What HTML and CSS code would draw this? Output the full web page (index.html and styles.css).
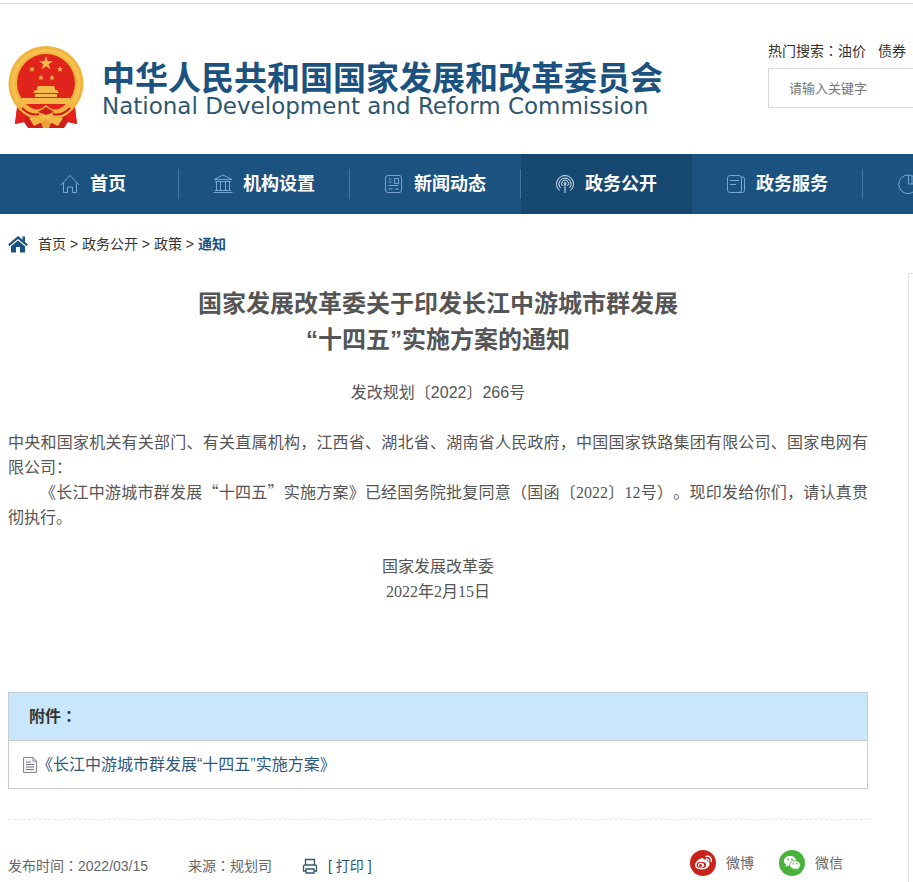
FILE: index.html
```html
<!DOCTYPE html>
<html lang="zh-CN">
<head>
<meta charset="utf-8">
<meta name="viewport" content="width=device-width, initial-scale=1">
<title>国家发展改革委关于印发长江中游城市群发展“十四五”实施方案的通知</title>
<link rel="stylesheet" href="styles.css">
</head>
<body>
<header class="header">
  <svg class="emblem" viewBox="0 0 76 82" aria-hidden="true">
    <path d="M10 54L7 78l9-2 4 6h36l4-6 9 2-3-24z" fill="#cf1f1b"/>
    <path d="M10 54L7 78l9-2 2-14zM66 54l3 24-9-2-2-14z" fill="#e4211c"/>
    <circle cx="38" cy="37.500" r="37.500" fill="#f2b53c"/>
    <circle cx="38" cy="37.500" r="33" fill="none" stroke="#f6c352" stroke-width="3"/>
    <circle cx="38" cy="37" r="29" fill="#e0231b"/>
    <g fill="#f6b94a">
      <path d="M38 10l1.700 5h5.300l-4.300 3.200 1.700 5.100-4.400-3.100-4.400 3.100 1.700-5.100L31 15h5.300z"/>
      <path d="M24 20l.8 2.200H27l-1.800 1.400.7 2.300-1.900-1.300-1.900 1.300.7-2.300L21 22.200h2.300zM52 20l.8 2.200H55l-1.800 1.400.7 2.300-1.900-1.300-1.900 1.300.7-2.300-1.800-1.400h2.300zM33 28.500l.8 2.200H36l-1.800 1.400.7 2.300-1.900-1.300-1.900 1.300.7-2.300-1.800-1.400h2.300zM44 28.500l.8 2.200H47l-1.800 1.400.7 2.300-1.900-1.300-1.900 1.300.7-2.300-1.800-1.400h2.300z"/>
      <path d="M29 42l1-2h16l1 2v2h2l2 3H25l2-3h2zM27 48h22v3H27zM14 52h48v6H14z"/>
    </g>
    <path d="M10 55c7 7 16 11 24 7l4-3 4 3c8 4 17 0 24-7-1 10-8 17-18 17-5 0-7-2-10-4-3 2-5 4-10 4-10 0-17-7-18-17z" fill="#f3b242"/>
    <path d="M14 62c5 5 10 8 17 6M62 62c-5 5-10 8-17 6" fill="none" stroke="#cf1f1b" stroke-width="2"/>
    <path d="M30 66l8-5 8 5-8 3z" fill="#cf1f1b"/>
    <path d="M21 72c7 0 11 1 17 0 6 1 10 0 17 0l-5 8-6-3H32l-6 3z" fill="#f5b545"/>
    <path d="M33 77l5-4 5 4-2 5h-6z" fill="#e9a336"/>
  </svg>
  <div class="brand">
    <div class="brand-cn">中华人民共和国国家发展和改革委员会</div>
    <div class="brand-en" lang="en">National Development and Reform Commission</div>
  </div>
  <form class="search" role="search">
    <div class="hot">
      <label for="q">热门搜索<span class="colon" lang="zh-Hant">：</span></label><a href="#">油价</a><a class="hot-next" href="#">债券</a>
    </div>
    <input class="search-box" id="q" type="text" placeholder="请输入关键字">
  </form>
</header>

<nav class="nav">
  <ul class="nav-list">
    <li class="nav-item"><a href="#">
      <svg class="nav-icon" viewBox="0 0 20 20" aria-hidden="true"><path d="M.8 11L10 1.500 19.200 11M3.500 9v9.500h4v-5.500h5v5.500h4V9"/></svg>首页</a></li>
    <li class="nav-item"><a href="#">
      <svg class="nav-icon" viewBox="0 0 20 20" aria-hidden="true"><path d="M1 5.500L10 1l9 4.500zM.5 18.500h19M3.500 7v10M7.500 7v10M12.500 7v10M16.500 7v10M2 16.500h16M2 7.500h16"/></svg>机构设置</a></li>
    <li class="nav-item"><a href="#">
      <svg class="nav-icon" viewBox="0 0 20 20" aria-hidden="true"><rect x="1.500" y="1.500" width="16" height="17" rx="2.500"/><path d="M10.500 4.500h4v5h-4zM4.500 5h3M4.500 8h3M4.500 11.500h10M4.500 15h4M11 15h4"/></svg>新闻动态</a></li>
    <li class="nav-item active"><a href="#" aria-current="page">
      <svg class="nav-icon" viewBox="0 0 20 20" aria-hidden="true"><path d="M4.500 16.500A8.500 8.500 0 1 1 15.500 16.500M5.500 14A6 6 0 1 1 14.500 14M7.500 12A3.500 3.500 0 1 1 12.500 12M10 9.500v9.500"/><circle cx="10" cy="9.500" r="1"/></svg>政务公开</a></li>
    <li class="nav-item"><a href="#">
      <svg class="nav-icon" viewBox="0 0 20 20" aria-hidden="true"><rect x="1.500" y="1.500" width="14" height="17" rx="2.500"/><path d="M4 6.500h9M4 10.500h6M15.500 3h1a2 2 0 0 1 2 2v11.500a2 2 0 0 1-2 2H13"/></svg>政务服务</a></li>
    <li class="nav-item nav-item-icon"><a href="#" aria-label="数据">
      <svg class="nav-icon" viewBox="0 0 20 20" aria-hidden="true"><path d="M10 1a9.300 9.300 0 1 0 9.300 9.300M10.500 1v9h9A9 9 0 0 0 10.500 1zM14 2v8"/></svg></a></li>
  </ul>
</nav>

<div class="crumbs">
  <svg class="crumb-icon" viewBox="0 0 20 18" aria-hidden="true"><path d="M10 1L0 9.500 1.500 11 10 4l8.500 7L20 9.500l-3-2.600V1.500h-2.500v3.300zM3 11.200V17.500h5v-5.500h4v5.500h5v-6.300L10 5.500z" fill="#1b5280"/></svg>
  <div><a href="#">首页</a> &gt; <a href="#">政务公开</a> &gt; <a href="#">政策</a> &gt; <a class="here" href="#">通知</a></div>
</div>

<div class="page">
  <main class="article">
    <h1 class="title">国家发展改革委关于印发长江中游城市群发展<br>“十四五”实施方案的通知</h1>
    <p class="doc-no">发改规划〔2022〕266号</p>
    <div class="text">
      <p>中央和国家机关有关部门、有关直属机构，江西省、湖北省、湖南省人民政府，中国国家铁路集团有限公司、国家电网有限公司：</p>
      <p class="indent">《长江中游城市群发展“十四五”实施方案》已经国务院批复同意（国函〔<span class="num">2022</span>〕<span class="num">12</span>号）。现印发给你们，请认真贯彻执行。</p>
    </div>
    <div class="sign">国家发展改革委<br>2022年2月15日</div>

    <section class="attach">
      <h2 class="attach-head">附件<span class="colon" lang="zh-Hant">：</span></h2>
      <div class="attach-body">
        <svg class="file-icon" viewBox="0 0 14 16" aria-hidden="true"><path d="M.5.500h9.500l3.500 3.500v11.500H.5zM10 .5V4h3.500" fill="#f3f3f6" stroke="#86868f"/><path d="M3 5h5M3 7.500h8M3 10h8M3 12.500h8" stroke="#77777f"/></svg>
        <a href="#">《长江中游城市群发展“十四五”实施方案》</a>
      </div>
    </section>

    <footer class="meta">
      <span>发布时间<span class="colon" lang="zh-Hant">：</span>2022/03/15</span>
      <span class="source">来源<span class="colon" lang="zh-Hant">：</span>规划司</span>
      <button class="print" type="button">
        <svg class="print-icon" viewBox="0 0 16 16" aria-hidden="true"><path d="M3.500 7V1.500h9V7M3.500 13h-2V8.500q0-1.500 1.500-1.500h10q1.500 0 1.500 1.500V13h-2M4 11h8v4H4z" fill="none" stroke="#2b5570" stroke-width="1.300"/></svg>
        [ 打印 ]</button>
      <div class="share">
        <a class="share-link" href="#">
          <svg class="share-icon" viewBox="0 0 26 26" aria-hidden="true"><circle cx="13" cy="13" r="13" fill="#c9231b"/><path d="M11.500 8.200c1.600-.6 2.500.2 2.100 1.800 2-.9 4.300-.5 3.800 1.600 1.800.5 2.600 1.700 2 3.300-1 2.900-4.400 4.600-8 4.600-3.800 0-6.700-1.900-6.400-4.700.3-2.700 3.700-5.800 6.500-6.600z" fill="#fff"/><ellipse cx="11.300" cy="15" rx="4.800" ry="3.300" fill="#c9231b"/><ellipse cx="11" cy="15.200" rx="3" ry="2.400" fill="#fff"/><circle cx="10.500" cy="15.600" r="1.500" fill="#c9231b"/><path d="M16 6.300c3.500-.7 6 1.700 5.200 5.200M16.300 8.900c1.700-.3 2.700.8 2.300 2.300" fill="none" stroke="#fff" stroke-width="1.300" stroke-linecap="round"/></svg>
          微博</a>
        <a class="share-link" href="#">
          <svg class="share-icon" viewBox="0 0 26 26" aria-hidden="true"><circle cx="13" cy="13" r="13" fill="#49b23b"/><path d="M11 6c3.500 0 6.200 2.100 6.200 4.900 0 2.800-2.700 4.900-6.200 4.900-.8 0-1.500-.1-2.200-.3L6.500 17l.6-2.400C5.700 13.700 5 12.400 5 10.900 5 8.100 7.600 6 11 6z" fill="#fff"/><path d="M16 10.700c3 0 5.400 1.900 5.400 4.200 0 1.300-.7 2.500-1.900 3.300l.5 2-2.100-1.200c-.6.200-1.200.2-1.900.2-3 0-5.300-1.900-5.300-4.300s2.300-4.200 5.300-4.200z" fill="#fff" stroke="#49b23b" stroke-width=".8"/><g fill="#49b23b"><circle cx="9" cy="9.500" r=".9"/><circle cx="13" cy="9.500" r=".9"/><circle cx="14.300" cy="13.800" r=".8"/><circle cx="17.800" cy="13.800" r=".8"/></g></svg>
          微信</a>
      </div>
    </footer>
  </main>
  <aside class="side"></aside>
</div>
</body>
</html>
```
FILE: styles.css
```css
* {
  box-sizing: border-box;
}

body {
  margin: 0;
  overflow-x: hidden;
  background: #fff;
  color: #555;
  font-family: "Liberation Sans", "Noto Sans CJK SC", sans-serif;
  font-size: 14px;
  line-height: 20px;
  text-spacing-trim: space-all;
}

h1,
h2,
p,
ul {
  margin: 0;
  padding: 0;
}

a {
  color: inherit;
  text-decoration: none;
}

.colon {
  font-family: "Noto Sans CJK TC", sans-serif;
  line-height: 0;
}

.num {
  font-family: "Liberation Serif", serif;
  line-height: 0;
}

/* Header */
.header {
  display: flex;
  align-items: flex-start;
  margin-top: 3px;
  padding: 37px 0 26px 8px;
  border-top: 1px solid #d9d9d9;
}

.emblem {
  flex: none;
  width: 76px;
  height: 82px;
  margin-top: 5px;
}

.brand {
  flex: none;
  margin: 23px 0 0 18px;
  white-space: nowrap;
}

.brand-cn {
  color: #1b5280;
  font-size: 33px;
  font-weight: 700;
  line-height: 30px;
}

.brand-en {
  color: #2f566f;
  font-family: "DejaVu Sans", sans-serif;
  font-size: 23px;
  line-height: 24px;
}

.search {
  flex: 1;
  min-width: 145px;
  margin-left: 105px;
}

.hot {
  color: #333;
  line-height: 20px;
  white-space: nowrap;
}

.hot-next {
  margin-left: 12px;
}

.search-box {
  display: block;
  width: 100%;
  height: 40px;
  margin-top: 7px;
  padding: 0 20px;
  border: 1px solid #d9d9d9;
  border-right: 0;
  border-radius: 0;
  background: #fff;
  font: inherit;
  font-size: 13px;
}

.search-box::placeholder {
  color: #757575;
}

/* Navigation */
.nav {
  overflow: hidden;
  background: #1b5280;
}

.nav-list {
  display: flex;
  padding-left: 8px;
  list-style: none;
}

.nav-item {
  display: flex;
  flex: 0 0 171px;
  align-items: center;
  height: 60px;
}

.nav-item a {
  display: flex;
  flex: 1;
  align-items: center;
  justify-content: center;
  gap: 10px;
  height: 30px;
  border-right: 1px solid #4377a3;
  color: #fff;
  font-size: 18px;
  font-weight: 700;
}

.nav-item-icon a {
  justify-content: flex-start;
  padding-left: 35px;
}

.nav-item.active {
  background: #174871;
}

.nav-item.active a {
  border-color: transparent;
}

.nav-icon {
  width: 20px;
  height: 20px;
  fill: none;
  stroke: #78a8d2;
}

.active .nav-icon {
  stroke: #dcecf8;
}

/* Breadcrumb */
.crumbs {
  display: flex;
  align-items: center;
  gap: 10px;
  padding: 20px 8px 19px;
  color: #333;
}

.crumb-icon {
  width: 20px;
  height: 18px;
}

.here {
  color: #1b5280;
  font-weight: 700;
}

/* Article */
.page {
  display: flex;
  gap: 40px;
  padding-left: 8px;
}

.article {
  flex: 1;
  min-width: 0;
  padding-top: 13px;
}

.side {
  flex: 0 0 5px;
  border: 1px solid #e2e2e2;
  border-width: 1px 0 0 1px;
}

.title {
  color: #555;
  font-size: 24px;
  font-weight: 700;
  line-height: 36px;
  text-align: center;
}

.doc-no {
  margin-top: 25px;
  font-size: 16px;
  line-height: 20px;
  text-align: center;
}

.text {
  margin-top: 26px;
  font-family: "Noto Sans CJK SC", sans-serif;
  font-size: 16px;
  line-height: 25px;
  text-align: justify;
}

.indent {
  text-indent: 2em;
}

.sign {
  margin-top: 25px;
  font-family: "Liberation Serif", "Noto Sans CJK SC", sans-serif;
  font-size: 16px;
  line-height: 25px;
  text-align: center;
}

/* Attachment */
.attach {
  margin-top: 88px;
  border: 1px solid #c5cdd3;
}

.attach-head {
  padding: 0 20px;
  border-bottom: 1px solid #c5cdd3;
  background: #c8e7fb;
  color: #333;
  font-size: 16px;
  font-weight: 700;
  line-height: 47px;
}

.attach-body {
  display: flex;
  align-items: center;
  padding: 0 14px;
  color: #2f5a7c;
  font-size: 16px;
  line-height: 47px;
}

.file-icon {
  width: 14px;
  height: 16px;
}

/* Meta row */
.meta {
  display: flex;
  align-items: flex-end;
  margin-top: 30px;
  padding: 30px 25px 6px 0;
  border-top: 1px dashed #e6e6e6;
  color: #666;
}

.source {
  margin-left: 40px;
}

.print {
  display: flex;
  align-items: center;
  gap: 10px;
  margin-left: 30px;
  padding: 0;
  border: 0;
  background: none;
  color: #2b5570;
  font: inherit;
}

.print-icon {
  width: 16px;
  height: 16px;
}

.share {
  display: flex;
  gap: 25px;
  margin-left: auto;
}

.share-link {
  display: flex;
  align-items: center;
  gap: 10px;
}

.share-icon {
  width: 26px;
  height: 26px;
}
```
